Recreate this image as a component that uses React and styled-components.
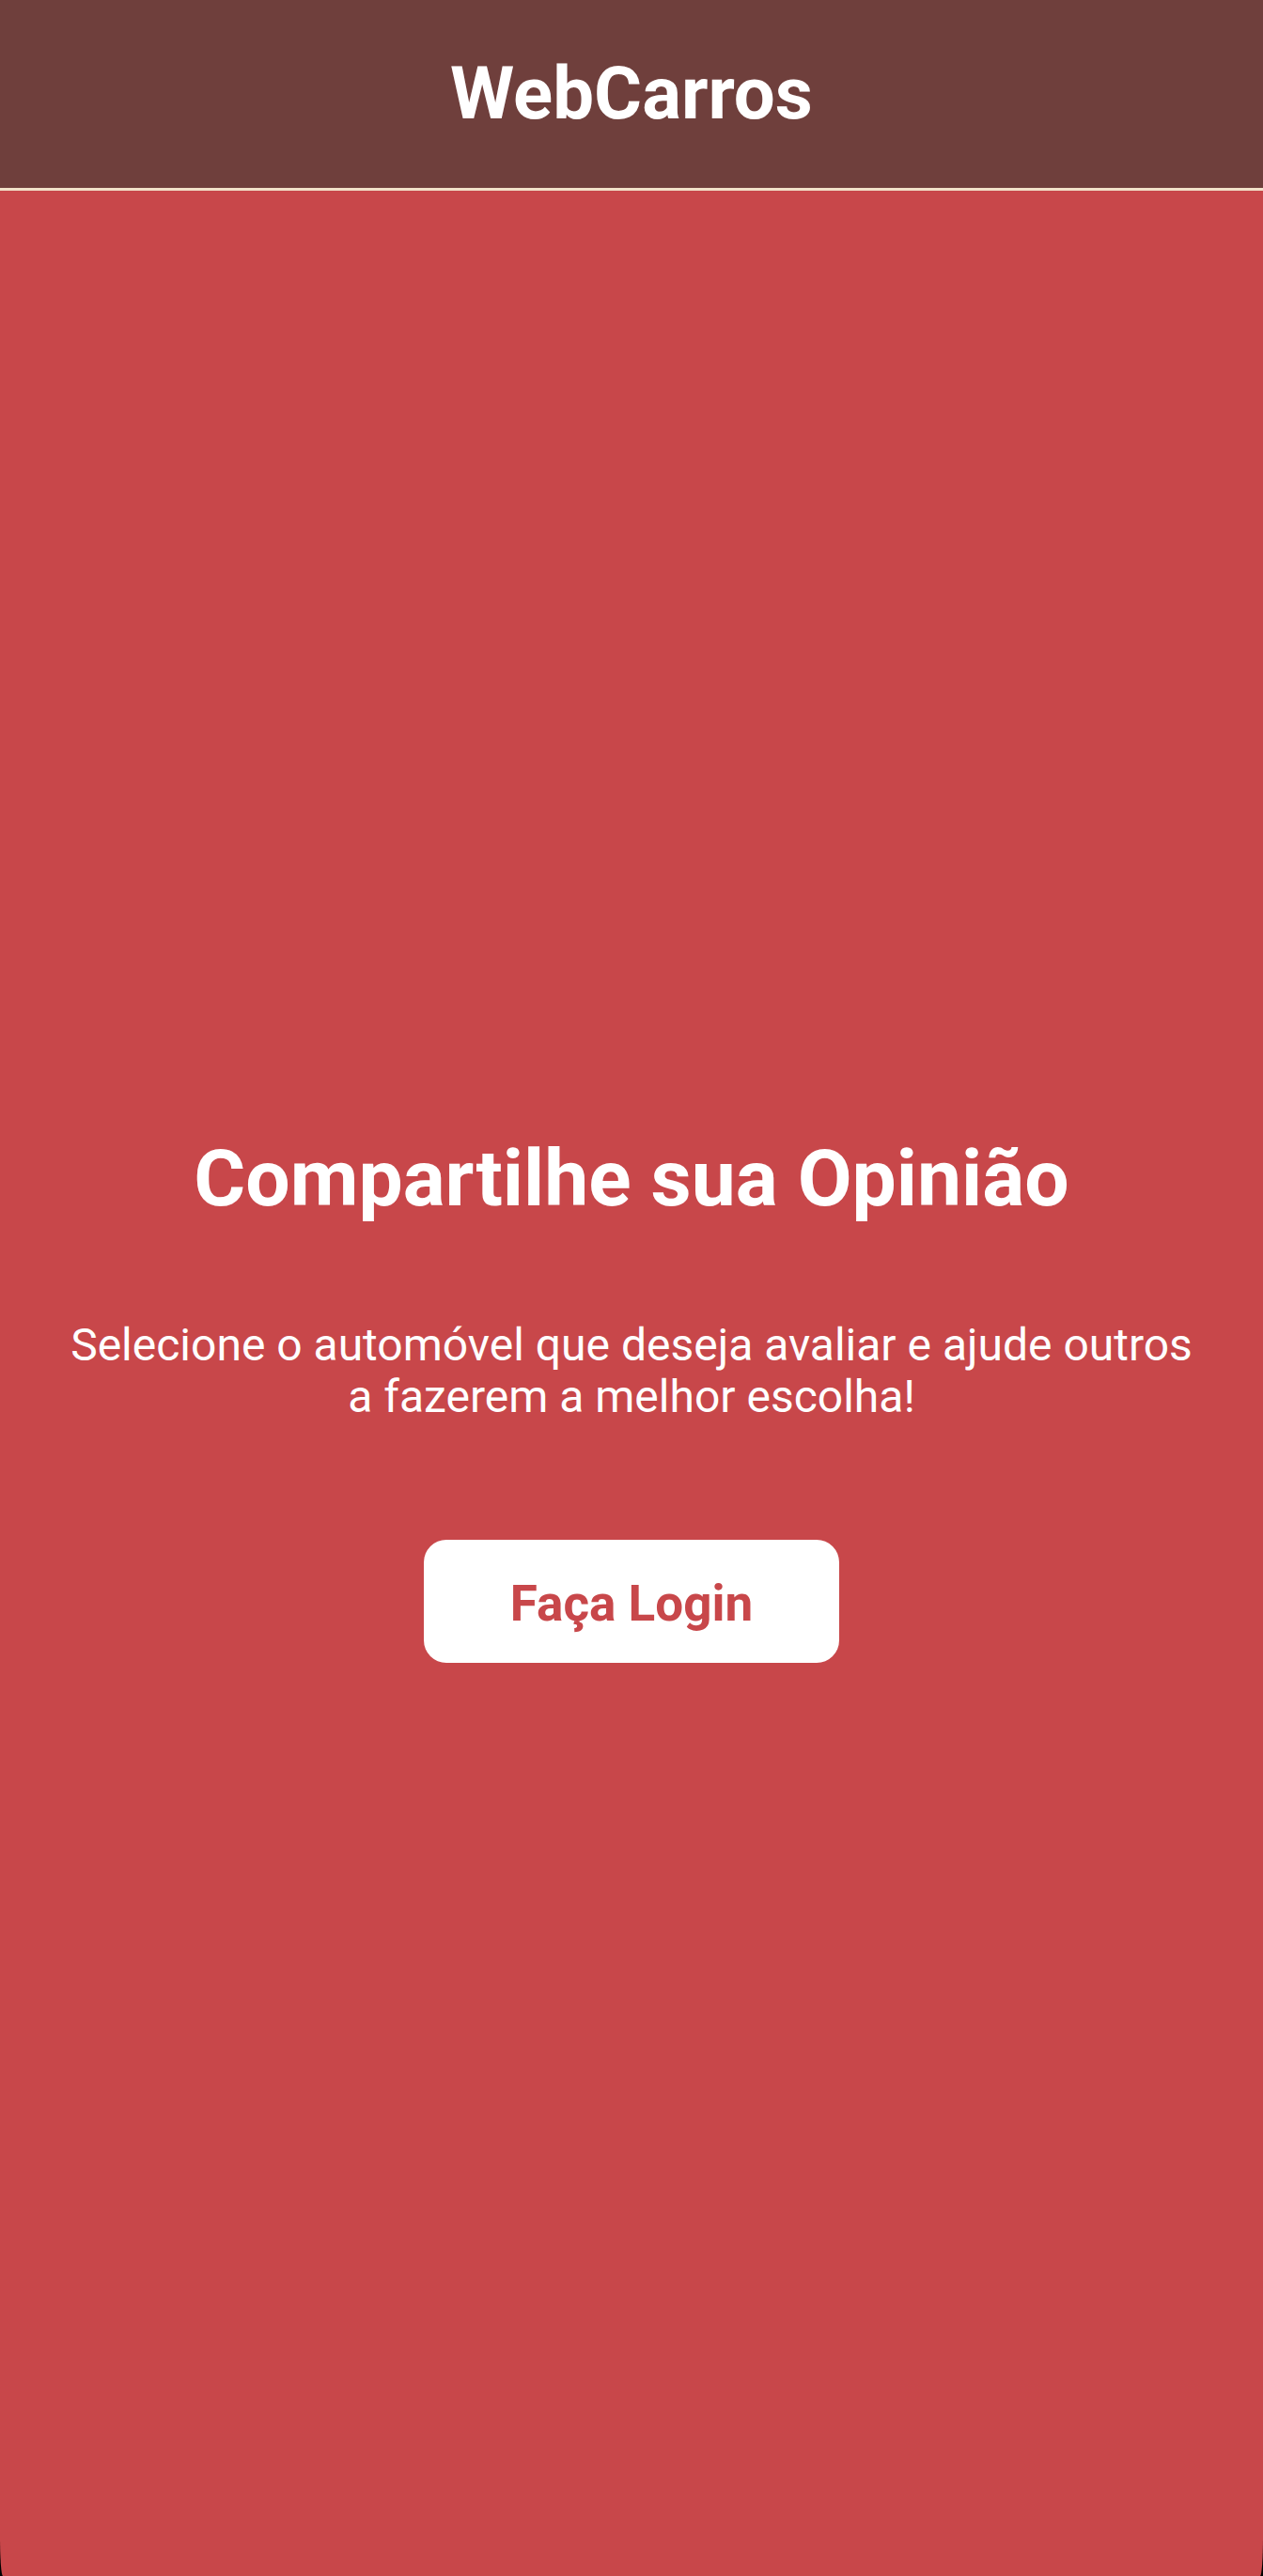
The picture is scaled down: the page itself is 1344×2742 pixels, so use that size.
import styled, { createGlobalStyle } from "styled-components";

const GlobalStyle = createGlobalStyle`
  html, body {
    margin: 0;
    padding: 0;
    background: #000;
  }
  body {
    font-family: Roboto, "Noto Sans", "Liberation Sans", sans-serif;
  }
  * {
    box-sizing: border-box;
  }
`;

const Screen = styled.div`
  display: flex;
  flex-direction: column;
  min-height: 100vh;
`;

const Header = styled.header`
  display: flex;
  align-items: center;
  justify-content: center;
  height: 203px;
  background-color: #6f3f3c;
  border-bottom: 3px solid #f2e1c9;
`;

const Brand = styled.h1`
  margin: 0;
  font-size: 78px;
  font-weight: 700;
  line-height: 1.2;
  color: #fff;
`;

const Main = styled.main`
  flex: 1;
  display: flex;
  flex-direction: column;
  align-items: center;
  justify-content: center;
  padding: 30px 72px 0;
  background-color: #c8474a;
  border-bottom-left-radius: 3px 42px;
  border-bottom-right-radius: 3px 42px;
  text-align: center;
  color: #fff;
`;

const Title = styled.h2`
  margin: 0;
  font-size: 84px;
  font-weight: 700;
  line-height: 1.2;
`;

const Text = styled.p`
  margin: 98px 0 0;
  max-width: 1200px;
  font-size: 48px;
  font-weight: 400;
  line-height: 1.15;
`;

const LoginButton = styled.button`
  display: flex;
  align-items: center;
  justify-content: center;
  width: 442px;
  height: 131px;
  margin-top: 125px;
  padding: 6px 0 0;
  border: none;
  border-radius: 24px;
  background-color: #fff;
  color: #c8474a;
  font-family: inherit;
  font-size: 53px;
  font-weight: 700;
  line-height: 1.2;
  cursor: pointer;
`;

function App() {
  return (
    <>
      <GlobalStyle />
      <Screen>
        <Header>
          <Brand>WebCarros</Brand>
        </Header>
        <Main>
          <Title>Compartilhe sua Opinião</Title>
          <Text>
            Selecione o automóvel que deseja avaliar e ajude outros a fazerem
            a melhor escolha!
          </Text>
          <LoginButton>Faça Login</LoginButton>
        </Main>
      </Screen>
    </>
  );
}

export default App;
